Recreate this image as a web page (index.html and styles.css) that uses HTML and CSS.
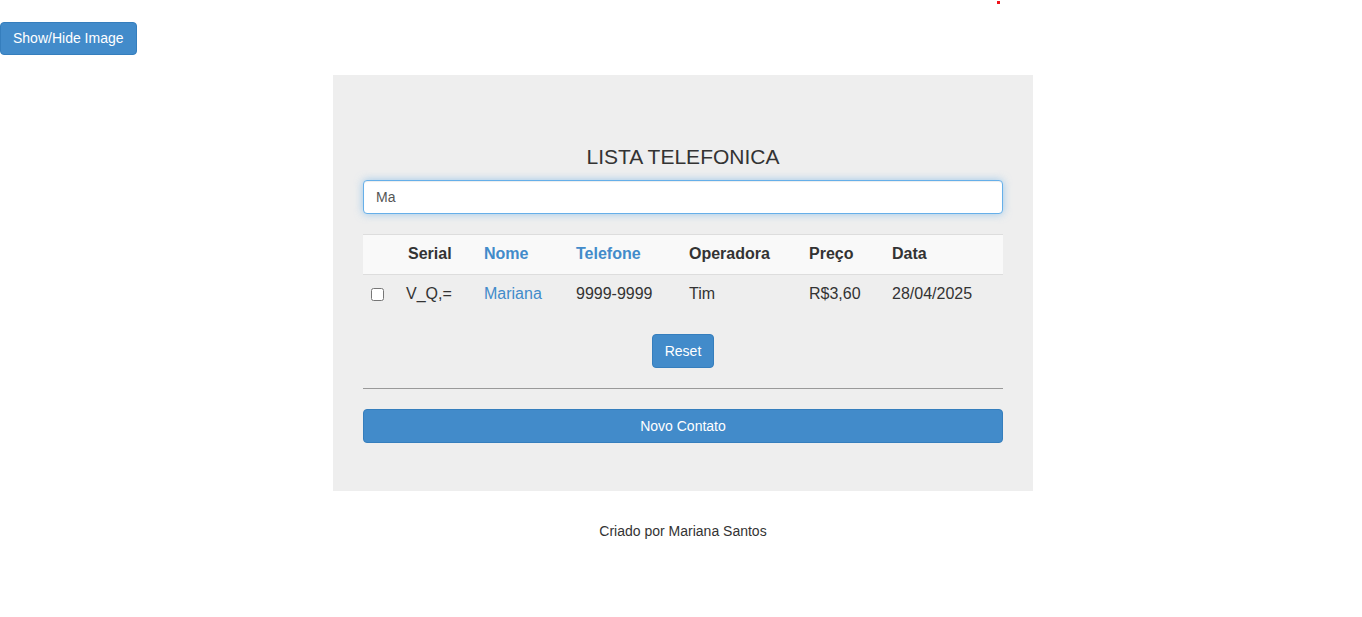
FILE: index.html
```html
<!DOCTYPE html>
<html lang="pt">
<head>
<meta charset="utf-8">
<title>Lista Telefonica</title>
<link rel="stylesheet" href="styles.css">
</head>
<body>
<span class="dot"></span>
<div class="top">
  <button class="btn btn-primary btn-toggle">Show/Hide Image</button>
</div>
<main class="main">
  <div class="panel">
    <h3 class="title">LISTA TELEFONICA</h3>
    <input class="search" type="text" value="Ma">
    <table class="grid">
      <colgroup>
        <col class="c1"><col class="c2"><col class="c3"><col class="c4"><col class="c5"><col class="c6"><col class="c7">
      </colgroup>
      <thead>
        <tr>
          <th></th>
          <th>Serial</th>
          <th><a class="link">Nome</a></th>
          <th><a class="link">Telefone</a></th>
          <th>Operadora</th>
          <th>Preço</th>
          <th>Data</th>
        </tr>
      </thead>
      <tbody>
        <tr>
          <td><input class="check" type="checkbox"></td>
          <td class="serial">V_Q,=</td>
          <td><a class="link">Mariana</a></td>
          <td>9999-9999</td>
          <td>Tim</td>
          <td>R$3,60</td>
          <td>28/04/2025</td>
        </tr>
      </tbody>
    </table>
    <div class="center">
      <button class="btn btn-primary">Reset</button>
    </div>
    <hr class="rule">
    <button class="btn btn-primary btn-block">Novo Contato</button>
  </div>
  <footer class="footer">Criado por Mariana Santos</footer>
</main>
</body>
</html>
```
FILE: styles.css
```css
html, body {
  margin: 0;
  padding: 0;
  background: #fff;
  font-family: "Liberation Sans", Arial, sans-serif;
  font-size: 14px;
  line-height: 1.42857;
  color: #333;
}
.dot {
  position: absolute;
  left: 997px;
  top: 1px;
  width: 3px;
  height: 3px;
  background: #f0141c;
}
.top {
  padding-top: 22px;
}
.main {
  padding-left: 4px;
}
.btn {
  display: inline-block;
  font-family: "Liberation Sans", Arial, sans-serif;
  font-size: 14px;
  line-height: 20px;
  padding: 6px 12px;
  border: 1px solid transparent;
  border-radius: 4px;
  cursor: pointer;
  vertical-align: top;
}
.btn-toggle {
  line-height: 19px;
}
.btn-primary {
  color: #fff;
  background: #428bca;
  border-color: #357ebd;
}
.btn-block {
  display: block;
  width: 100%;
}
.panel {
  width: 700px;
  box-sizing: border-box;
  margin: 20px auto 0;
  padding: 30px 30px 48px;
  background: #eee;
}
.title {
  margin: 41px 0 12px;
  font-size: 21px;
  font-weight: normal;
  line-height: 22px;
  text-align: center;
  color: #333;
}
.search {
  display: block;
  width: 100%;
  box-sizing: border-box;
  height: 34px;
  padding: 6px 12px;
  font-family: "Liberation Sans", Arial, sans-serif;
  font-size: 14px;
  color: #555;
  background: #fff;
  border: 1px solid #66afe9;
  border-radius: 4px;
  outline: 0;
  box-shadow: inset 0 1px 1px rgba(0,0,0,.075), 0 0 8px rgba(102,175,233,.6);
  margin: 0 0 20px;
}
.grid {
  width: 100%;
  table-layout: fixed;
  border-collapse: collapse;
  font-size: 16px;
}
.c1 { width: 37px; }
.c2 { width: 76px; }
.c3 { width: 92px; }
.c4 { width: 113px; }
.c5 { width: 120px; }
.c6 { width: 83px; }
.c7 { width: 119px; }
.grid th {
  text-align: left;
  font-weight: bold;
  background: #f9f9f9;
  border-top: 1px solid #ddd;
  border-bottom: 1px solid #ddd;
  height: 39px;
  padding: 0 8px;
  vertical-align: middle;
}
.grid td {
  height: 39px;
  padding: 0 8px;
  vertical-align: middle;
}
.grid td.serial {
  padding-left: 6px;
}
.link {
  color: #428bca;
  text-decoration: none;
}
.check {
  display: block;
  margin: 0;
  width: 13px;
  height: 13px;
}
.center {
  text-align: center;
  margin-top: 20px;
}
.rule {
  border: 0;
  border-top: 1px solid #999;
  margin: 20px 0;
}
.footer {
  text-align: center;
  margin-top: 30px;
  line-height: 20px;
}
```
